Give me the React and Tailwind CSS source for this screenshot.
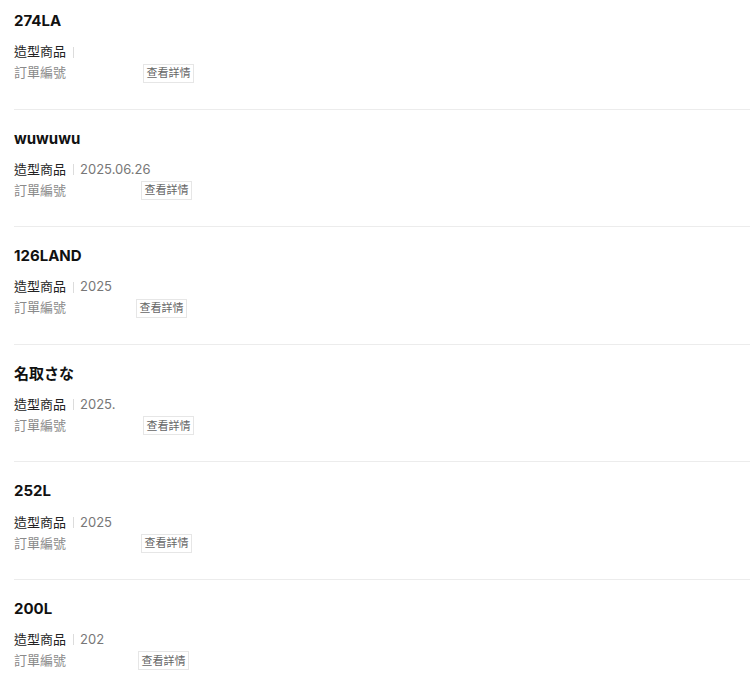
import React from "react";

const orders = [
  { name: "274LA", date: "", btn: 143 },
  { name: "wuwuwu", date: "2025.06.26", btn: 141 },
  { name: "126LAND", date: "2025", btn: 136 },
  { name: "名取さな", date: "2025.", btn: 143 },
  { name: "252L", date: "2025", btn: 141 },
  { name: "200L", date: "202", btn: 138 },
];

function OrderCard({ order, first }) {
  return (
    <div
      className={`border-b border-[#ececec] ${first ? "pt-[11px]" : "pt-[19px]"} pb-[25.6px]`}
    >
      {/* Title */}
      <div className="h-5 leading-5 text-[15px] font-bold text-[#111]">
        {order.name}
      </div>

      {/* Product row */}
      <div className="mt-[11px] flex items-center h-5 text-[13px] whitespace-nowrap">
        <span className="text-[#222]">造型商品</span>
        <span className="ml-[7px] w-px h-[11px] bg-[#dcdcdc]" />
        <span className="ml-[6px] text-[#777]">{order.date}</span>
      </div>

      {/* Order no row */}
      <div className="mt-px flex items-center h-5 text-[13px] whitespace-nowrap">
        <span className="text-[#8a8a8a] shrink-0">訂單編號</span>
        <span className="shrink-0" style={{ width: order.btn - 66 }} />
        <button className="shrink-0 h-[19px] w-[51px] flex items-center justify-center border border-[#e6e6e6] bg-white text-[11px] text-[#666]">
          查看詳情
        </button>
      </div>
    </div>
  );
}

export default function App() {
  return (
    <div
      className="w-[750px] h-[675px] overflow-hidden bg-white pl-[14px]"
      style={{ fontFamily: '"Inter", "Noto Sans CJK TC", sans-serif' }}
    >
      {orders.map((o, i) => (
        <OrderCard key={o.name} order={o} first={i === 0} />
      ))}
    </div>
  );
}
